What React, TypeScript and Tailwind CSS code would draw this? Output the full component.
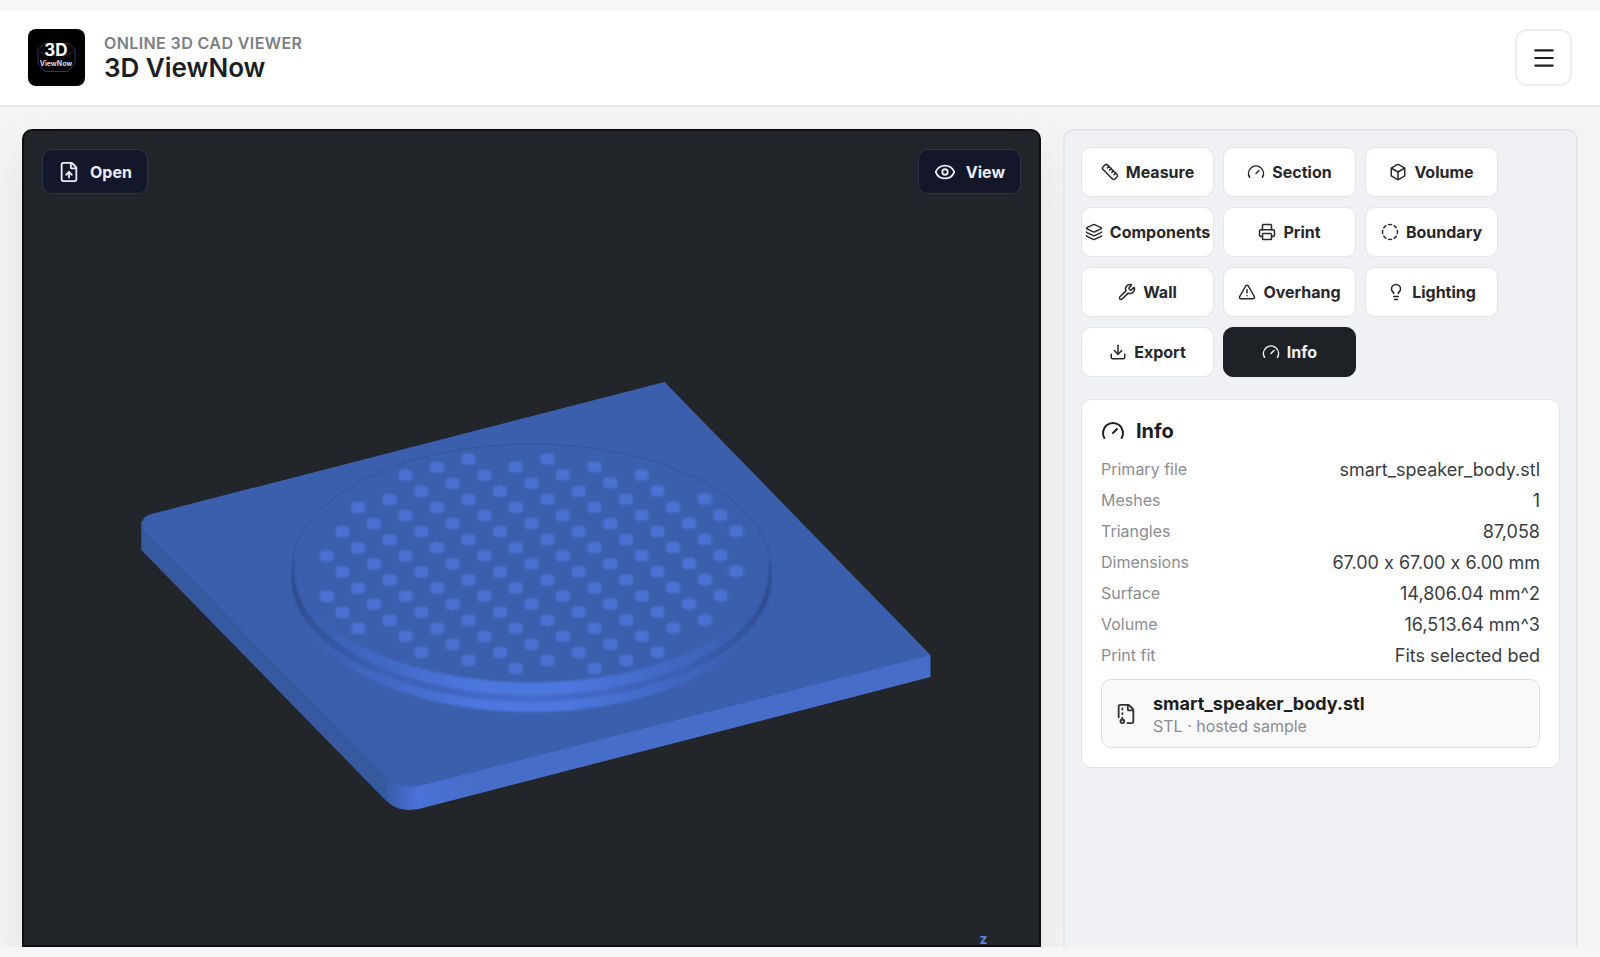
import React from 'react';
import {
  Box,
  CircleDashed,
  Download,
  Eye,
  FileArchive,
  FileUp,
  Gauge,
  Layers,
  Lightbulb,
  Menu,
  Printer,
  Ruler,
  TriangleAlert,
  Wrench,
} from 'lucide-react';

const TOOLS = [
  { label: 'Measure', icon: Ruler },
  { label: 'Section', icon: Gauge },
  { label: 'Volume', icon: Box },
  { label: 'Components', icon: Layers },
  { label: 'Print', icon: Printer },
  { label: 'Boundary', icon: CircleDashed },
  { label: 'Wall', icon: Wrench },
  { label: 'Overhang', icon: TriangleAlert },
  { label: 'Lighting', icon: Lightbulb },
  { label: 'Export', icon: Download },
  { label: 'Info', icon: Gauge },
];

const STATS = [
  ['Primary file', 'smart_speaker_body.stl'],
  ['Meshes', '1'],
  ['Triangles', '87,058'],
  ['Dimensions', '67.00 x 67.00 x 6.00 mm'],
  ['Surface', '14,806.04 mm^2'],
  ['Volume', '16,513.64 mm^3'],
  ['Print fit', 'Fits selected bed'],
];

// Grille holes: a square grid clipped to a circle, projected onto the plate
const HOLES: { x: number; y: number }[] = [];
for (let i = -6; i <= 6; i++) {
  for (let j = -6; j <= 6; j++) {
    if (i * i + j * j <= 37) {
      HOLES.push({ x: 510 + i * 15.76 + j * 31.5, y: 434.8 + i * 16.1 - j * 8.1 });
    }
  }
}

const Logo: React.FC = () => (
  <svg viewBox="0 0 57 57" className="size-[57px] shrink-0 rounded-lg bg-black" role="img" aria-label="3D ViewNow logo">
    <path d="M16 14.5h25l6 6v14l-7 8H17l-7-8v-14z" fill="none" stroke="#30355c" strokeWidth="1" />
    <path d="M10 21l7 5h23l7-5" fill="none" stroke="#23263f" strokeWidth="1" />
    <text x="28" y="27" textAnchor="middle" fill="#fff" fontFamily="Inter, sans-serif" fontSize="17" fontWeight="700">3D</text>
    <text x="28" y="37" textAnchor="middle" fill="#d5d7e2" fontFamily="Inter, sans-serif" fontSize="7" fontWeight="700">ViewNow</text>
  </svg>
);

const Model: React.FC = () => (
  <svg viewBox="0 0 1020 818" preserveAspectRatio="xMidYMid slice" className="size-full" aria-hidden="true">
    <defs>
      <linearGradient id="rim" x1="0" x2="1" y1="0" y2="0">
        <stop offset="0" stopColor="#3b5fad" />
        <stop offset="0.06" stopColor="#3c60b2" />
        <stop offset="0.2" stopColor="#426ac6" />
        <stop offset="0.38" stopColor="#4b77de" />
        <stop offset="0.58" stopColor="#4b77de" />
        <stop offset="0.78" stopColor="#4269c4" />
        <stop offset="0.92" stopColor="#3c60b2" />
        <stop offset="1" stopColor="#3b5fad" />
      </linearGradient>
      <linearGradient id="groove" x1="0" x2="1" y1="0" y2="0">
        <stop offset="0" stopColor="#2c4a8c" />
        <stop offset="0.06" stopColor="#34559e" />
        <stop offset="0.2" stopColor="#3c60b4" />
        <stop offset="0.5" stopColor="#456dce" />
        <stop offset="0.8" stopColor="#3c60b4" />
        <stop offset="0.94" stopColor="#34559e" />
        <stop offset="1" stopColor="#2c4a8c" />
      </linearGradient>
      <linearGradient id="edge" gradientUnits="userSpaceOnUse" x1="360" x2="450" y1="0" y2="0">
        <stop offset="0" stopColor="#37599f" />
        <stop offset="0.2" stopColor="#3f65bd" />
        <stop offset="0.4" stopColor="#4a72d8" />
        <stop offset="1" stopColor="#466dc8" />
      </linearGradient>
      <filter id="soft" x="-5%" y="-5%" width="110%" height="110%">
        <feGaussianBlur stdDeviation="1" />
      </filter>
    </defs>

    {/* Plate */}
    <path d="M120 392V421L365 672Q374 681 388 681Q396 681 405 678L909 548V526Z" fill="url(#edge)" />
    <path d="M120 392V421L365 672V646Z" fill="#37599f" />
    <path d="M643 253L909 526L402 656Q376 662 364 648L123 402Q116 389 130 385Z" fill="#3b5fad" />

    {/* Raised grille */}
    <g filter="url(#soft)">
      <ellipse cx="510" cy="460" rx="236" ry="123" fill="url(#rim)" />
      <ellipse cx="510" cy="449" rx="240" ry="124" fill="url(#groove)" />
      <ellipse cx="510" cy="443" rx="237" ry="123" fill="url(#rim)" />
      <ellipse cx="510" cy="435" rx="237" ry="118.5" fill="#3b5fad" />
    </g>
    <path d="M270 440A240 125 0 0 1 750 440" fill="none" stroke="#34549b" strokeWidth="1" />
    <g fill="#4b72d2" filter="url(#soft)">
      {HOLES.map(({ x, y }) => (
        <rect key={`${x}-${y}`} x={x - 7} y={y - 5.5} width="14" height="11" rx="4" />
      ))}
    </g>

    <text x="958" y="815" fill="#5b83dc" fontFamily="Inter, sans-serif" fontSize="14" fontWeight="700">z</text>
  </svg>
);

const Viewer: React.FC = () => (
  <section className="relative min-h-[480px] overflow-hidden rounded-t-[10px] border-2 border-[#0d0f12] bg-[#22262a]" aria-label="Model viewer">
    <div className="absolute -inset-[2px]">
      <Model />
    </div>
    <div className="relative flex justify-between px-[18px] py-[18px] text-base font-bold text-[#e9ebf5]">
      <button type="button" className="flex h-[45px] items-center gap-[10px] rounded-[10px] border border-[#30344a] bg-[#14172a] px-[15px]">
        <FileUp size={22} strokeWidth={2} />
        Open
      </button>
      <button type="button" className="flex h-[45px] items-center gap-[10px] rounded-[10px] border border-[#30344a] bg-[#14172a] px-[15px]">
        <Eye size={22} strokeWidth={2} />
        View
      </button>
    </div>
  </section>
);

const InfoCard: React.FC = () => (
  <section className="mt-[22px] rounded-[10px] border border-[#e3e4e8] bg-white px-[19px] pt-4 pb-[19px]">
    <h2 className="flex h-[30px] items-center gap-[11px] text-xl font-bold text-[#1c1e21]">
      <Gauge size={24} strokeWidth={2} />
      Info
    </h2>
    <dl className="mt-2">
      {STATS.map(([name, value]) => (
        <div key={name} className="flex justify-between">
          <dt className="text-base leading-[31px] text-[#8b8d92]">{name}</dt>
          <dd className="text-lg leading-[31px] text-[#3a3c40] [font-feature-settings:'calt'_0]">{value}</dd>
        </div>
      ))}
    </dl>
    <div className="mt-2 flex h-[69px] items-center gap-4 rounded-[10px] border border-[#dcdde0] bg-[#f9f9fa] px-[13px]">
      <FileArchive size={22} strokeWidth={2} className="text-[#303236]" />
      <div>
        <p className="text-lg leading-6 font-bold text-[#1c1e21]">smart_speaker_body.stl</p>
        <p className="text-base leading-5 text-[#8b8d92]">STL · hosted sample</p>
      </div>
    </div>
  </section>
);

const App: React.FC = () => {
  return (
    <div className="flex min-h-screen flex-col bg-[#f4f6f8] py-[10px] font-['Inter',sans-serif] text-[#1c1e21] [font-optical-sizing:none]">
      <header className="flex h-[97px] items-center justify-between border-b-2 border-[#e6e6e8] bg-white px-7">
        <div className="flex items-center gap-[19px]">
          <Logo />
          <div className="pb-[3px]">
            <p className="text-base leading-6 font-semibold tracking-wide text-[#7b7f83] uppercase">Online 3D CAD Viewer</p>
            <h1 className="text-[26px] leading-[26px] font-semibold">3D ViewNow</h1>
          </div>
        </div>
        <button type="button" aria-label="Open menu" className="grid size-[57px] place-items-center rounded-xl border-2 border-[#eeeeef] bg-white">
          <Menu size={26} strokeWidth={2} />
        </button>
      </header>

      <main className="grid flex-1 grid-cols-[minmax(0,1fr)_515px] gap-[22px] overflow-hidden bg-[#f4f4f4] px-[22px] pt-[22px]">
        <div className="grid shadow-[0_24px_48px_rgba(0,0,0,0.08)]">
          <Viewer />
        </div>

        <aside className="rounded-t-[10px] border-x-2 border-t-2 border-[#e4e5e8] bg-[#eff1f5] px-4 pt-4">
          <div className="grid grid-cols-[repeat(3,133px)] gap-x-[9px] gap-y-[10px]">
            {TOOLS.map(({ label, icon: Icon }) => (
              <button
                key={label}
                type="button"
                aria-pressed={label === 'Info'}
                className="flex h-[50px] items-center justify-center gap-[7px] rounded-[10px] border border-[#e3e4e8] bg-white text-base font-bold text-[#26282c] aria-pressed:border-[#1e2227] aria-pressed:bg-[#1e2227] aria-pressed:text-[#eef0f2]"
              >
                <Icon size={18} strokeWidth={2} className="shrink-0" />
                {label}
              </button>
            ))}
          </div>
          <InfoCard />
        </aside>
      </main>
    </div>
  );
};

export default App;
